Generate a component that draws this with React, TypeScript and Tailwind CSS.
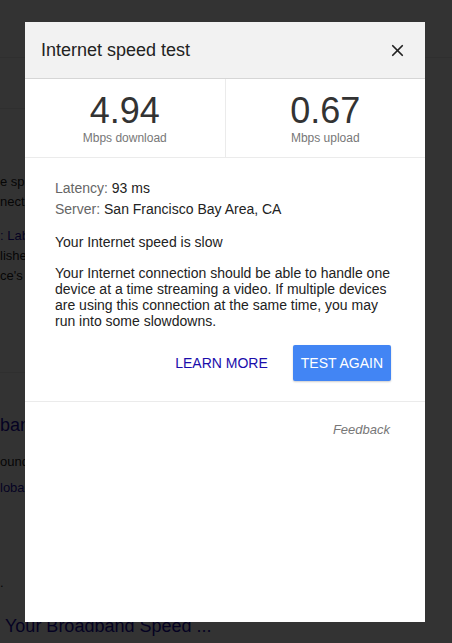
import { X } from 'lucide-react';

const font = "font-['Liberation_Sans',Arial,Helvetica,sans-serif]";

const SpeedCell = ({ value, label, divider }: { value: string; label: string; divider?: boolean }) => (
  <div className={`flex flex-1 flex-col items-center pt-[12px] ${divider ? 'border-r border-[#ebebeb]' : ''}`}>
    <div className="text-[36px] leading-[40px] text-[#333]">{value}</div>
    <div className="text-[12px] leading-[14px] text-[#777]">{label}</div>
  </div>
);

const App = () => {
  return (
    <div className={`relative h-[643px] w-[452px] overflow-hidden bg-white ${font}`}>
      {/* results page behind the dialog */}
      <div className="h-[58px] border-b border-[#ebebeb]" />
      <div className="h-[51px] w-[200px] border-b border-[#ebebeb]" />
      <div className="w-[25px] overflow-hidden whitespace-nowrap">
        <div className="pt-[63px] text-[13px] leading-[20px] text-[#222]">
          <div>e sp</div>
          <div>nect</div>
          <div className="mt-[14px] text-[#1a0dab]">: Lab</div>
          <div>lishe</div>
          <div>ce's</div>
        </div>
      </div>
      <div className="mt-[86px] h-px w-[200px] bg-[#ebebeb]" />
      <div className="whitespace-nowrap">
        <div className="w-[25px] overflow-hidden">
          <div className="mt-[41px] text-[18px] leading-[22px] text-[#1a0dab]">ban</div>
          <div className="mt-[16px] text-[13px] leading-[20px] text-[#222]">ound</div>
          <div className="mt-[6px] text-[13px] leading-[20px] text-[#1a0dab]">loba</div>
          <div className="mt-[75px] text-[13px] leading-[20px] text-[#222]">.</div>
        </div>
        <div className="mt-[22px] pl-[5px] text-[18px] leading-[22px] text-[#1a0dab]">Your Broadband Speed ...</div>
      </div>

      {/* dim overlay */}
      <div className="absolute inset-0 bg-black/80" />

      {/* dialog */}
      <div className="absolute left-[25px] top-[22px] flex h-[600px] w-[400px] flex-col bg-white">
        <div className="flex h-[57px] items-center justify-between border-b border-[#d6d6d6] bg-[#f2f2f2] pl-[16px] pr-[18px]">
          <div className="text-[18px] text-[#222]">Internet speed test</div>
          <X size={19} strokeWidth={2.2} className="text-[#222]" />
        </div>

        <div className="flex h-[79px] border-b border-[#ebebeb]">
          <SpeedCell value="4.94" label="Mbps download" divider />
          <SpeedCell value="0.67" label="Mbps upload" />
        </div>

        <div className="border-b border-[#ebebeb] pb-[20px] pl-[30px] pr-[34px] pt-[20px] text-[14px] text-[#222]">
          <div className="leading-[21px]">
            <span className="text-[#666]">Latency:</span> 93 ms
          </div>
          <div className="leading-[21px]">
            <span className="text-[#666]">Server:</span> San Francisco Bay Area, CA
          </div>
          <div className="mt-[12px] leading-[21px]">Your Internet speed is slow</div>
          <p className="mt-[12px] leading-[16px]">
            Your Internet connection should be able to handle one device at a time streaming a video. If multiple devices are using this connection at the same time, you may run into some slowdowns.
          </p>
          <div className="mt-[16px] flex items-center justify-end gap-[17px]">
            <button className="h-[36px] px-[8px] text-[14px] text-[#1a0dab]">LEARN MORE</button>
            <button className="h-[36px] rounded-[2px] bg-[#4285f4] px-[8px] text-[14px] text-white shadow-[0_1px_2px_rgba(0,0,0,0.2)]">
              TEST AGAIN
            </button>
          </div>
        </div>

        <div className="flex justify-end pr-[35px] pt-[20px] text-[13px] italic leading-[16px] text-[#777]">Feedback</div>
      </div>
    </div>
  );
};

export default App;
